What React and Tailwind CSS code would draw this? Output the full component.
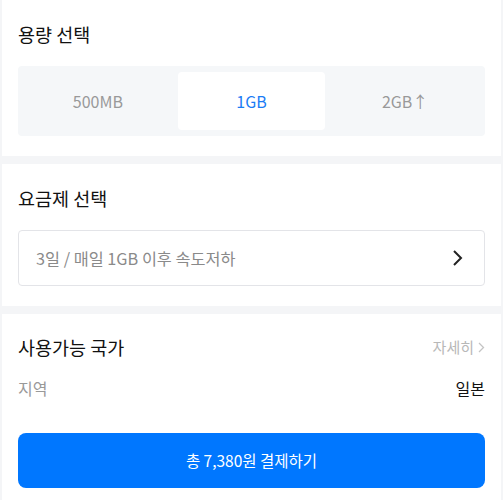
import React, { useState } from 'react';

const FONT = { fontFamily: '"Noto Sans CJK KR", "Noto Sans", sans-serif' };

const sizes = ['500MB', '1GB', '2GB↑'];

const App = () => {
  const [size, setSize] = useState('1GB');

  return (
    <div className="w-[503px] h-[500px] overflow-hidden bg-[#f4f5f7] px-[2px] flex flex-col gap-[8px]" style={FONT}>
      {/* 용량 선택 */}
      <section className="bg-white px-[16px] pt-[21px] pb-[20px]">
        <h2 className="text-[18.5px] leading-[26px] text-[#111]">용량 선택</h2>
        <div className="mt-[19px] bg-[#f5f7f9] rounded-[4px] p-[6px] grid grid-cols-3 gap-[6px]">
          {sizes.map(s => (
            <button
              key={s}
              onClick={() => setSize(s)}
              className={`h-[58px] rounded-[4px] text-[16px] ${size === s ? 'bg-white text-[#1a7cf5]' : 'text-[#999]'}`}
            >
              {s}
            </button>
          ))}
        </div>
      </section>

      {/* 요금제 선택 */}
      <section className="bg-white px-[16px] pt-[21px] pb-[20px]">
        <h2 className="text-[18.5px] leading-[26px] text-[#111]">요금제 선택</h2>
        <button className="mt-[19px] w-full h-[56px] border border-[#e3e4e8] rounded-[4px] flex items-center justify-between pl-[17px] pr-[20px]">
          <span className="text-[16.3px] text-[#8a8a8a]">3일 / 매일 1GB 이후 속도저하</span>
          <svg width="12" height="18" viewBox="0 0 12 18" fill="none" stroke="#222" strokeWidth="2">
            <path d="M2 2l7 7-7 7" />
          </svg>
        </button>
      </section>

      {/* 사용가능 국가 */}
      <section className="flex-1 bg-white px-[16px] pt-[20px]">
        <div className="flex items-center justify-between">
          <h2 className="text-[18.5px] leading-[26px] text-[#111]">사용가능 국가</h2>
          <span className="text-[15px] text-[#b8b8b8] flex items-center gap-[4px]">
            자세히
            <svg width="7" height="11" viewBox="0 0 7 11" fill="none" stroke="#c4c4c4" strokeWidth="1.3">
              <path d="M1 1l4.5 4.5L1 10" />
            </svg>
          </span>
        </div>
        <div className="mt-[16px] flex items-center justify-between">
          <span className="text-[16px] text-[#999]">지역</span>
          <span className="text-[16px] text-[#111]">일본</span>
        </div>
        <button className="mt-[33px] w-full h-[55px] bg-[#0077ff] rounded-[8px] text-white text-[15.5px]">
          총 7,380원 결제하기
        </button>
      </section>
    </div>
  );
};

export default App;
